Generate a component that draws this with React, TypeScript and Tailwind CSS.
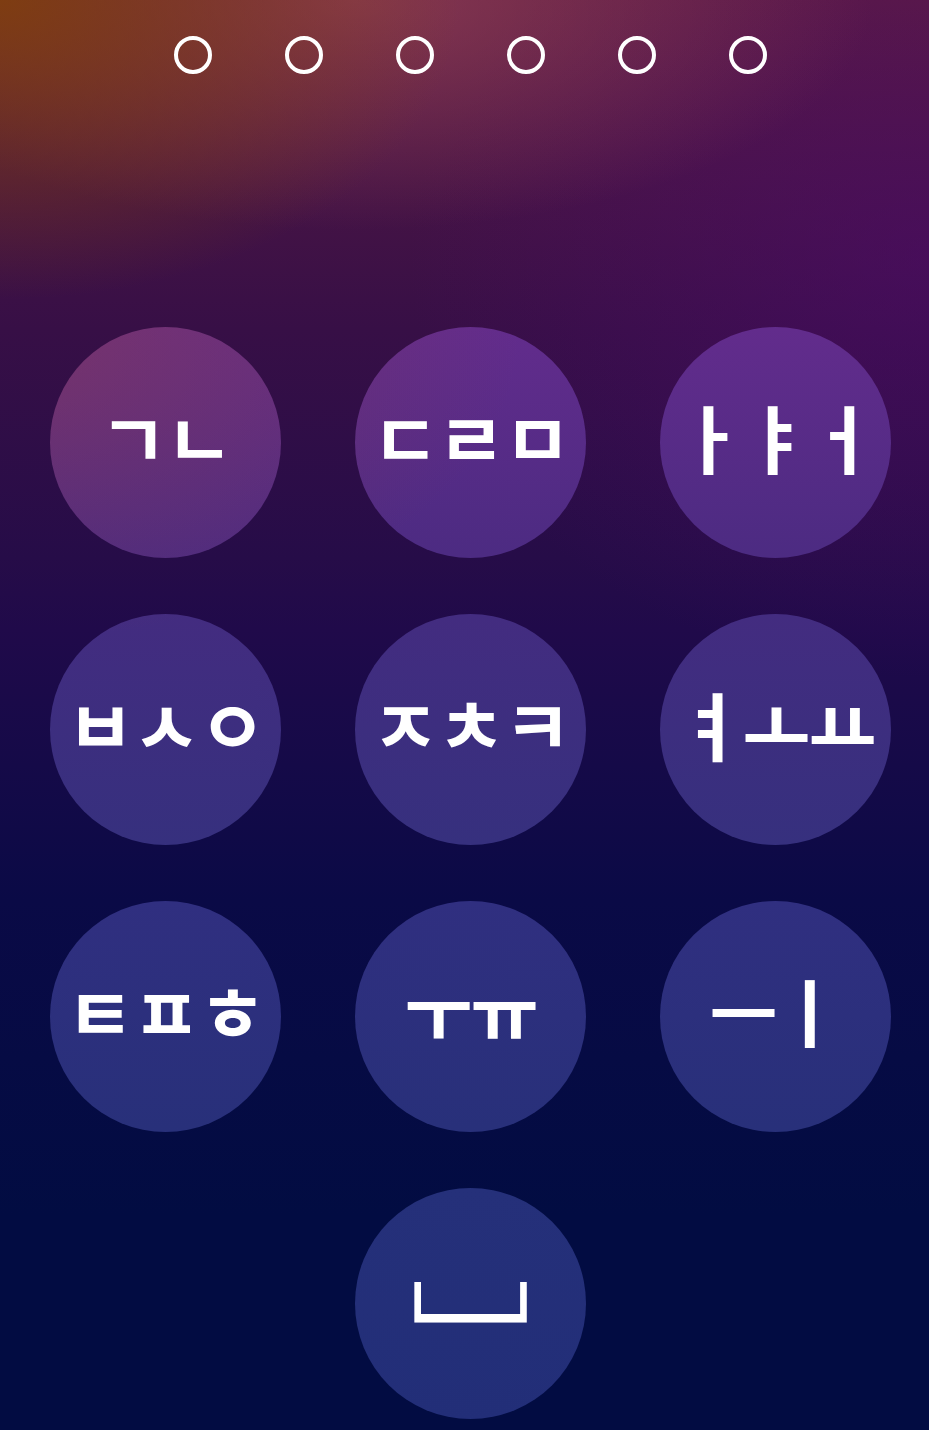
const keys = ["ㄱㄴ", "ㄷㄹㅁ", "ㅏㅑㅓ", "ㅂㅅㅇ", "ㅈㅊㅋ", "ㅕㅗㅛ", "ㅌㅍㅎ", "ㅜㅠ", "ㅡㅣ"];

// circle fill is page-fixed so every key picks up its slice of the same wash
const KeyButton = ({ label, big }: { label: string; big?: boolean }) => (
  <button className="w-[231px] h-[231px] rounded-full bg-fixed bg-[radial-gradient(ellipse_520px_300px_at_0px_340px,rgba(150,62,60,0.42),transparent),linear-gradient(180deg,#6a2e7c_0%,#622c8c_23%,#4c2b82_39%,#432c80_43%,#36307e_59%,#302f80_63%,#28307a_79%,#25307a_83%,#222e78_100%)] flex items-center justify-center text-white leading-none font-bold font-['Noto_Sans_CJK_KR',sans-serif]">
    {big ? (
      <span className="text-[150px] font-black scale-y-[1.3] -mt-[172px]">{label}</span>
    ) : (
      <span className="text-[74px] tracking-[-2px] -mt-[14px]">{label}</span>
    )}
  </button>
);

export default function App() {
  return (
    <div className="w-[929px] h-[1430px] overflow-hidden bg-[linear-gradient(180deg,#5a1a44_0%,#370f46_23%,#260c48_39%,#200a4a_44%,#0a0a46_63%,#020c42_85%)]">
      <div className="w-full h-full bg-[radial-gradient(ellipse_520px_420px_at_100%_18%,rgba(80,10,110,0.5),transparent)]">
        <div className="w-full h-full pl-[50px] pr-[38px] bg-[radial-gradient(ellipse_460px_300px_at_0%_0%,rgba(130,65,8,0.85),transparent),radial-gradient(ellipse_520px_230px_at_38%_0%,rgba(170,80,90,0.55),transparent)]">
          <div className="flex justify-center gap-[73px] pt-[36px]">
            {[0, 1, 2, 3, 4, 5].map((i) => (
              <div key={i} className="w-[38px] h-[38px] rounded-full border-4 border-white" />
            ))}
          </div>
          <div className="grid grid-cols-[231px_231px_231px] gap-x-[74px] gap-y-[56px] mt-[253px]">
            {keys.map((k) => (
              <KeyButton key={k} label={k} />
            ))}
            <div />
            <KeyButton label="␣" big />
          </div>
        </div>
      </div>
    </div>
  );
}
